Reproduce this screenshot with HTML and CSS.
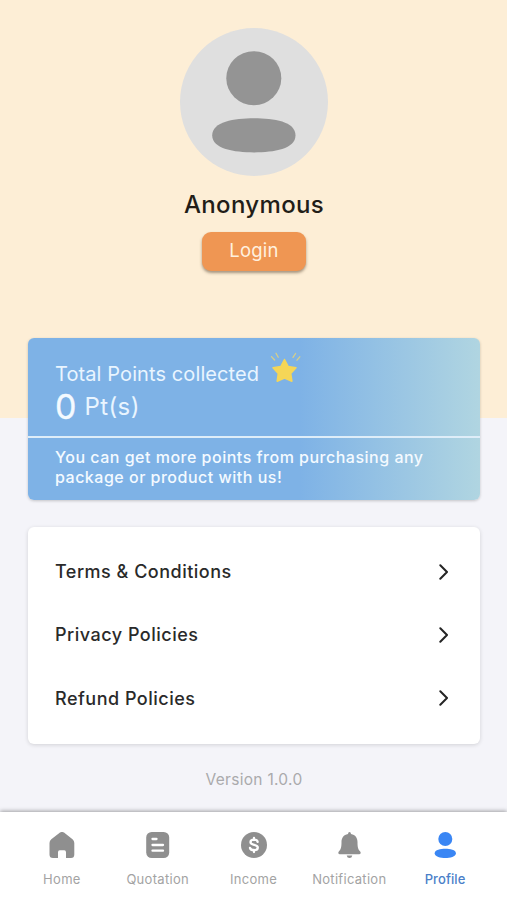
FILE: index.html
```html
<!DOCTYPE html>
<html lang="en">
<head>
<meta charset="utf-8">
<title>Profile</title>
<link rel="stylesheet" href="styles.css">
</head>
<body>
<div class="screen">
  <main class="content">
    <section class="profile">
      <svg class="avatar" viewBox="0 0 148 148">
        <circle cx="74" cy="74" r="74" fill="#dfdfdf"/>
        <ellipse cx="73.8" cy="50.2" rx="27.5" ry="27" fill="#949494"/>
        <path d="M74 90.200C94 90.200 115.500 93.500 115.500 107.300S94 124.400 74 124.400 32.200 121 32.200 107.300 54 90.200 74 90.200Z" fill="#949494"/>
      </svg>
      <h1 class="name">Anonymous</h1>
      <button class="login">Login</button>
    </section>
    <section class="points">
      <div class="points-main">
        <div class="points-title">
          <span class="points-label">Total Points collected</span>
          <svg class="star" viewBox="0 0 32 32">
            <path d="M14.500 7.500 18.200 14.500 26 15.700 20.700 21.400 21.900 29.200 14.500 26 7.200 29.200 8.300 21.400 3 15.700 10.800 14.500Z" fill="#f5d657" stroke="#f5d657" stroke-width="1.500" stroke-linejoin="round"/>
            <path d="M1.500 4.600 4.600 8M6 1.200 8.200 5.200M25.600 1.500 23 5.400M29.800 4.800 27 8.200" fill="none" stroke="#d8cf87" stroke-width="1.300" stroke-linecap="round"/>
          </svg>
        </div>
        <div class="points-value"><span class="amount">0</span><span class="unit">Pt(s)</span></div>
      </div>
      <p class="points-note">You can get more points from purchasing any package or product with us!</p>
    </section>
    <nav class="menu">
      <a class="menu-row"><span>Terms &amp; Conditions</span><svg class="chevron" viewBox="0 0 10 16"><path d="M1.300 1.300 8 8 1.300 14.700"/></svg></a>
      <a class="menu-row"><span>Privacy Policies</span><svg class="chevron" viewBox="0 0 10 16"><path d="M1.300 1.300 8 8 1.300 14.700"/></svg></a>
      <a class="menu-row"><span>Refund Policies</span><svg class="chevron" viewBox="0 0 10 16"><path d="M1.300 1.300 8 8 1.300 14.700"/></svg></a>
    </nav>
    <p class="version">Version 1.0.0</p>
  </main>
  <footer class="tabs">
    <a class="tab">
      <svg viewBox="0 0 26 26"><path d="M11 .600Q13 -.700 15 .600L23.500 7.300Q25.300 8.700 25.300 11V22.500Q25.300 26 22 26H17V20.200Q17 18.300 15.300 18.300H10.700Q9 18.300 9 20.200V26H4Q.500 26 .500 22.500V11Q.500 8.700 2.300 7.300Z"/></svg>
      <span>Home</span>
    </a>
    <a class="tab">
      <svg viewBox="0 0 26 26"><rect x="1.200" y="0" width="23" height="26" rx="5.500"/><path d="M7.500 7H11.500M7.500 13H18M7.500 18.700H18" stroke="#fff" stroke-width="2.300" stroke-linecap="round"/></svg>
      <span>Quotation</span>
    </a>
    <a class="tab">
      <svg class="income" viewBox="0 0 26 26"><circle cx="13" cy="13" r="13"/><path d="M16.600 9.800C16.300 8.300 15 7.700 13 7.700 10.800 7.700 9.500 8.600 9.500 10.200 9.500 13.800 16.800 11.800 16.800 15.500 16.800 17.300 15.200 18.200 13 18.200 10.800 18.200 9.400 17.500 9 15.900M13 6V8M13 18V20" fill="none" stroke="#fff" stroke-width="2.300" stroke-linecap="round"/></svg>
      <span>Income</span>
    </a>
    <a class="tab">
      <svg viewBox="0 0 26 26"><path d="M13.500 0Q14.900 0 15 2C19.500 2.700 21.500 6 21.500 10 21.500 15 22 17.300 24 19.200 25.300 20.500 24.700 22.200 23.100 22.200H3.900C2.300 22.200 1.700 20.500 3 19.200 5 17.300 5.500 15 5.500 10 5.500 6 7.500 2.700 12 2Q12.100 0 13.500 0ZM10.700 23.400H16.300Q15.800 26 13.500 26T10.700 23.400Z"/></svg>
      <span>Notification</span>
    </a>
    <a class="tab active">
      <svg viewBox="0 0 26 26"><circle cx="13.300" cy="7" r="7"/><path d="M13.300 16.700C18 16.700 23.900 17.600 23.900 21.300S18 26 13.300 26 2.700 25 2.700 21.300 8.600 16.700 13.300 16.700Z"/></svg>
      <span>Profile</span>
    </a>
  </footer>
</div>
</body>
</html>
```
FILE: styles.css
```css
* {
  box-sizing: border-box;
}

body {
  margin: 0;
  font-family: Inter, "Liberation Sans", sans-serif;
  color: #2a2a2a;
}

.screen {
  display: flex;
  flex-direction: column;
  height: 900px;
  overflow: hidden;
  background: linear-gradient(#fdeed6 418px, #f4f4f9 418px);
}

.content {
  flex: 1;
  padding: 28px 27px 0 28px;
}

.profile {
  display: flex;
  flex-direction: column;
  align-items: center;
  height: 310px;
}

.avatar {
  width: 148px;
  height: 148px;
}

.name {
  margin: 14px 0 0;
  font-size: 24px;
  line-height: 30px;
  font-weight: 500;
  letter-spacing: 0.35px;
  color: #221d18;
}

.login {
  width: 104px;
  height: 39px;
  margin-top: 12px;
  padding: 0 0 3px;
  border: 0;
  border-radius: 9px;
  background: #ef9653;
  box-shadow: 0 2px 3px rgba(80, 60, 40, 0.5);
  color: #fff0df;
  font-family: inherit;
  font-size: 18.500px;
  letter-spacing: 0.2px;
}

.points {
  height: 161.500px;
  border-radius: 6px;
  background: linear-gradient(90deg, #7eb2e6 60%, #b0d5e1);
  box-shadow: 0 1px 3px rgba(0, 0, 0, 0.2);
  color: #f4faff;
}

.points-main {
  height: 100px;
  padding: 14px 27px 0;
  border-bottom: 2px solid #deedf8;
}

.points-title {
  display: flex;
  align-items: flex-start;
  height: 36px;
  gap: 11px;
}

.points-label {
  margin-top: 10px;
  font-size: 20px;
  line-height: 24px;
  letter-spacing: 0.1px;
  color: #e9f5ff;
}

.star {
  width: 32px;
  height: 32px;
}

.points-value {
  display: flex;
  align-items: center;
  gap: 8px;
  margin-top: -1px;
  line-height: 40px;
}

.amount {
  font-size: 34px;
  -webkit-text-stroke: 0.3px currentColor;
}

.unit {
  font-size: 24px;
  letter-spacing: 0.4px;
  color: #e9f5ff;
}

.points-note {
  margin: 0;
  padding: 9px 27px 0;
  font-size: 16px;
  line-height: 20px;
  font-weight: 500;
  letter-spacing: 0.5px;
}

.menu {
  height: 217px;
  margin-top: 27px;
  padding: 13.500px 31px 0 27px;
  border-radius: 6px;
  background: #fff;
  box-shadow: 0 1px 4px rgba(0, 0, 0, 0.14);
}

.menu-row {
  display: flex;
  align-items: center;
  justify-content: space-between;
  height: 63.300px;
  font-size: 18px;
  font-weight: 500;
  letter-spacing: 0.5px;
}

.chevron {
  width: 10px;
  height: 16px;
  fill: none;
  stroke: #242424;
  stroke-width: 2;
  stroke-linecap: round;
  stroke-linejoin: round;
}

.version {
  margin: 26px 0 0;
  text-align: center;
  font-size: 15.500px;
  line-height: 20px;
  letter-spacing: 0.3px;
  color: #aaaaac;
}

.tabs {
  display: flex;
  height: 88px;
  padding: 0 14px;
  background: #fff;
  box-shadow: 0 -1px 4px rgba(0, 0, 0, 0.35);
}

.tab {
  display: flex;
  flex: 1;
  flex-direction: column;
  align-items: center;
  gap: 13px;
  padding-top: 20px;
  font-size: 13px;
  line-height: 16px;
  letter-spacing: 0.3px;
  color: #a3a3a3;
}

.tab svg {
  width: 26px;
  height: 26px;
  fill: #8f8f8f;
}

.tab .income {
  margin-left: 1px;
}

.tab.active {
  color: #4b7fc9;
  font-weight: 500;
  letter-spacing: 0.1px;
}

.tab.active svg {
  fill: #3a86f4;
}
```
